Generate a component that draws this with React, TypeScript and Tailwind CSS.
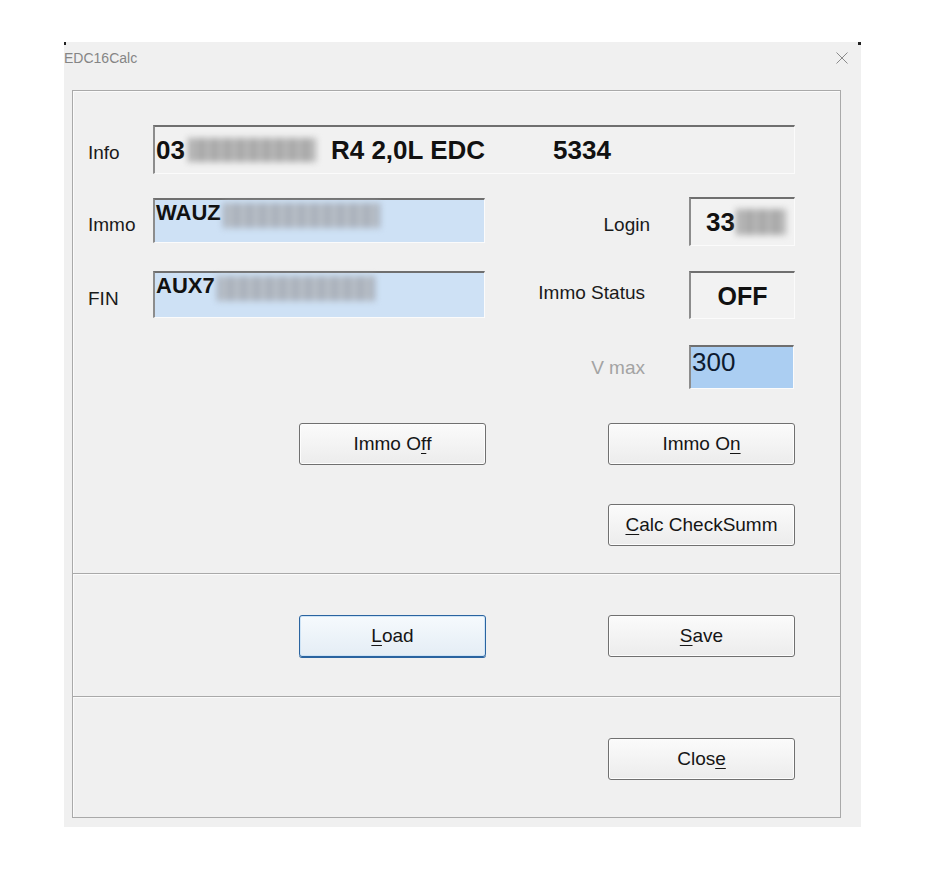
import React from "react";

const sunken =
  "border-t-2 border-l-2 border-r border-b border-t-[#6f6f6f] border-l-[#8c8c8c] border-r-[#fbfbfb] border-b-[#fbfbfb]";

function Blur({ w, h, tint }: { w: string; h: string; tint?: boolean }) {
  return (
    <div
      className={
        w +
        " " +
        h +
        " blur-[3px] " +
        (tint
          ? "bg-[repeating-linear-gradient(90deg,#a2a9b3_0px,#bcc3cc_7px,#a6adb7_13px)]"
          : "bg-[repeating-linear-gradient(90deg,#a0a0a0_0px,#bcbcbc_7px,#a4a4a4_13px)]")
      }
    />
  );
}

function Btn({ children, focused }: { children: React.ReactNode; focused?: boolean }) {
  return (
    <button
      className={
        "w-[187px] h-[42px] rounded-[3px] border text-[19px] leading-[22px] text-[#151515] flex items-center justify-center " +
        (focused
          ? "border-[#2a64a0] bg-linear-to-b from-[#f6fafd] to-[#e4edf5] shadow-[inset_0_0_0_1px_#cfe4f6,0_1px_0_#2a64a0]"
          : "border-[#707070] bg-linear-to-b from-[#fbfbfb] to-[#ececec] shadow-[inset_0_0_0_1px_#fdfdfd]")
      }
    >
      {children}
    </button>
  );
}

export default function App() {
  return (
    <div className="min-h-screen bg-white pt-[42px] pl-[64px] font-['Liberation_Sans',Arial,sans-serif]">
      <div className="relative w-[797px] h-[785px] bg-[#f0f0f0] flex flex-col">
        <div className="absolute top-0 left-0 w-[2px] h-[3px] bg-[#222]" />
        <div className="absolute top-0 right-0 w-[3px] h-[3px] bg-[#222]" />
        {/* title bar */}
        <div className="h-[48px] flex items-start justify-between shrink-0">
          <div className="pt-[8px] text-[14px] leading-[16px] text-[#858585]">EDC16Calc</div>
          <svg className="mt-[10px] mr-[13px]" width="12" height="12" viewBox="0 0 12 12">
            <path d="M0.5 0.5 L11.5 11.5 M11.5 0.5 L0.5 11.5" stroke="#8a8a8a" strokeWidth="1" fill="none" />
          </svg>
        </div>

        <div className="ml-[8px] w-[769px] border border-[#a9a9a9] shadow-[inset_1px_1px_0_#fbfbfb] flex flex-col">
          {/* section 1 */}
          <div className="h-[482px] pl-[15px] pr-[45px] text-[19px] leading-[22px] text-[#1a1a1a] flex flex-col">
            {/* Info */}
            <div className="flex items-start mt-[34px] h-[49px]">
              <div className="w-[65px] mt-[17px]">Info</div>
              <div className={"w-[642px] h-[49px] flex items-center pl-[1px] bg-[#f1f1f1] " + sunken}>
                <span className="text-[26px] font-bold leading-[30px] text-[#111]">03</span>
                <div className="ml-[3px]">
                  <Blur w="w-[128px]" h="h-[24px]" />
                </div>
                <span className="ml-[15px] text-[26px] font-bold leading-[30px] text-[#111]">R4 2,0L EDC</span>
                <span className="ml-[68px] text-[26px] font-bold leading-[30px] text-[#111]">5334</span>
              </div>
            </div>

            {/* Immo / Login */}
            <div className="flex items-start mt-[23px] h-[49px]">
              <div className="w-[65px] mt-[17px]">Immo</div>
              <div className={"w-[332px] h-[45px] mt-[1px] bg-[#cee1f5] flex items-start pl-[1px] pt-[1px] " + sunken}>
                <span className="text-[22px] font-bold leading-[24px] text-[#111]">WAUZ</span>
                <div className="ml-[2px] mt-[2px]">
                  <Blur w="w-[157px]" h="h-[25px]" tint />
                </div>
              </div>
              <div className="flex-1 text-right mt-[17px]">Login</div>
              <div className={"ml-[39px] w-[106px] h-[49px] bg-[#f2f2f2] flex items-center pl-[15px] " + sunken}>
                <span className="text-[26px] font-bold leading-[30px] text-[#111]">33</span>
                <div className="ml-[1px]">
                  <Blur w="w-[50px]" h="h-[26px]" />
                </div>
              </div>
            </div>

            {/* FIN / Immo Status */}
            <div className="flex items-start mt-[25px] h-[48px]">
              <div className="w-[65px] mt-[17px]">FIN</div>
              <div className={"w-[332px] h-[47px] bg-[#cee1f5] flex items-start pl-[1px] pt-[1px] " + sunken}>
                <span className="text-[22px] font-bold leading-[24px] text-[#111]">AUX7</span>
                <div className="ml-[2px] mt-[2px]">
                  <Blur w="w-[158px]" h="h-[25px]" tint />
                </div>
              </div>
              <div className="flex-1 text-right pr-[5px] mt-[11px]">Immo Status</div>
              <div className={"ml-[39px] w-[106px] h-[48px] bg-[#f2f2f2] flex items-center justify-center " + sunken}>
                <span className="text-[25px] font-bold leading-[30px] text-[#111]">OFF</span>
              </div>
            </div>

            {/* V max */}
            <div className="flex items-start mt-[26px] h-[44px]">
              <div className="w-[397px]" />
              <div className="flex-1 text-right pr-[5px] mt-[12px] text-[#a3a3a3]">V max</div>
              <div className={"ml-[39px] w-[105px] h-[44px] bg-[#abcef2] pl-[1px] mr-[1px] " + sunken}>
                <span className="text-[26px] leading-[30px] text-[#0e1a2e]">300</span>
              </div>
            </div>

            {/* Immo Off / On */}
            <div className="flex mt-[34px] h-[42px]">
              <div className="ml-[211px]">
                <Btn>
                  Immo O<span className="underline underline-offset-[3px]">f</span>f
                </Btn>
              </div>
              <div className="ml-[122px]">
                <Btn>
                  Immo O<span className="underline underline-offset-[3px]">n</span>
                </Btn>
              </div>
            </div>

            {/* Calc */}
            <div className="flex mt-[39px] h-[42px]">
              <div className="ml-[520px]">
                <Btn>
                  <span className="underline underline-offset-[3px]">C</span>alc CheckSumm
                </Btn>
              </div>
            </div>
          </div>

          {/* section 2 */}
          <div className="h-[123px] border-t border-[#a9a9a9] shadow-[inset_0_1px_0_#fbfbfb] pl-[15px]">
            <div className="flex pt-[41px]">
              <div className="ml-[211px]">
                <Btn focused>
                  <span className="underline underline-offset-[3px]">L</span>oad
                </Btn>
              </div>
              <div className="ml-[122px]">
                <Btn>
                  <span className="underline underline-offset-[3px]">S</span>ave
                </Btn>
              </div>
            </div>
          </div>

          {/* section 3 */}
          <div className="h-[121px] border-t border-[#a9a9a9] shadow-[inset_0_1px_0_#fbfbfb] pl-[15px]">
            <div className="flex pt-[41px]">
              <div className="ml-[520px]">
                <Btn>
                  Clos<span className="underline underline-offset-[3px]">e</span>
                </Btn>
              </div>
            </div>
          </div>
        </div>
      </div>
    </div>
  );
}
